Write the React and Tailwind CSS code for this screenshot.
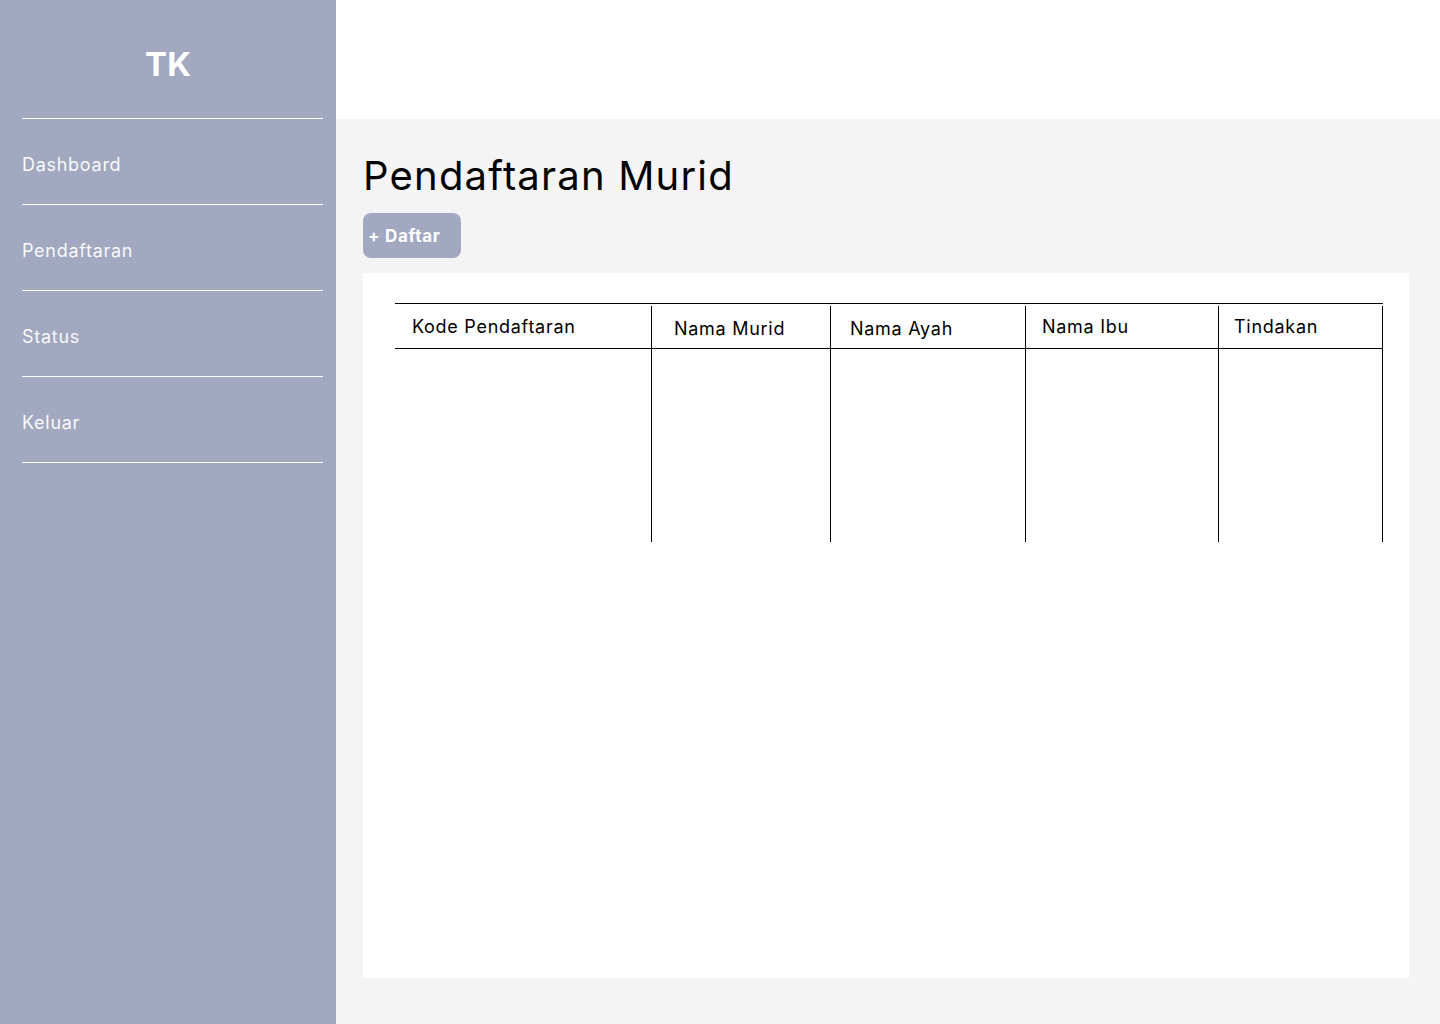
const navItems = ["Dashboard", "Pendaftaran", "Status", "Keluar"];

const columns = [
  { label: "Kode Pendaftaran", width: "w-[256px]", pad: "pl-[17px] pt-[12px]", edge: "" },
  { label: "Nama Murid", width: "w-[179px]", pad: "pl-[22px] pt-[14px]", edge: "border-l" },
  { label: "Nama Ayah", width: "w-[195px]", pad: "pl-[19px] pt-[14px]", edge: "border-l" },
  { label: "Nama Ibu", width: "w-[193px]", pad: "pl-[16px] pt-[12px]", edge: "border-l" },
  { label: "Tindakan", width: "w-[165px]", pad: "pl-[15px] pt-[12px]", edge: "border-l border-r" },
];

function Sidebar() {
  return (
    <aside className="w-[336px] shrink-0 bg-[#a2a8bf] min-h-screen text-white">
      <div className="h-[118px] flex items-center justify-center pt-[12px]">
        <span className="text-[33px] font-bold">TK</span>
      </div>
      <nav className="ml-[22px] w-[301px]">
        {navItems.map((item) => (
          <div key={item} className="h-[86px] border-t border-white flex items-center pt-[6px]">
            <span className="text-[18px] tracking-[0.04em] text-white/95">{item}</span>
          </div>
        ))}
        <div className="border-t border-white" />
      </nav>
    </aside>
  );
}

function RegistrationTable() {
  return (
    <div className="w-[988px]">
      <div className="border-t border-black" />
      <div className="flex">
        {columns.map((col) => (
          <div key={col.label} className={`${col.width} ${col.edge} border-black mt-[2px]`}>
            <div className={`h-[43px] border-b border-black ${col.pad} text-[18px] tracking-[0.04em] text-black leading-none`}>
              {col.label}
            </div>
            <div className="h-[193px]" />
          </div>
        ))}
      </div>
    </div>
  );
}

export default function App() {
  return (
    <div className="flex min-h-screen font-['Inter',sans-serif]">
      <Sidebar />
      <main className="flex-1 flex flex-col">
        <header className="h-[119px] bg-white shrink-0" />
        <section className="flex-1 bg-[#f4f4f4] pl-[27px] pr-[31px] pt-[30px] pb-[46px] flex flex-col">
          <h1 className="text-[40px] text-black leading-[50px] tracking-[0.03em] pt-[2px]">Pendaftaran Murid</h1>
          <div className="mt-[12px]">
            <button className="w-[98px] h-[45px] rounded-[8px] bg-[#a2a8bf] text-white text-[17px] font-bold tracking-[0.04em] text-left pl-[5px] pt-[2px]">
              + Daftar
            </button>
          </div>
          <div className="mt-[15px] flex-1 bg-white pl-[32px] pt-[30px]">
            <RegistrationTable />
          </div>
        </section>
      </main>
    </div>
  );
}
